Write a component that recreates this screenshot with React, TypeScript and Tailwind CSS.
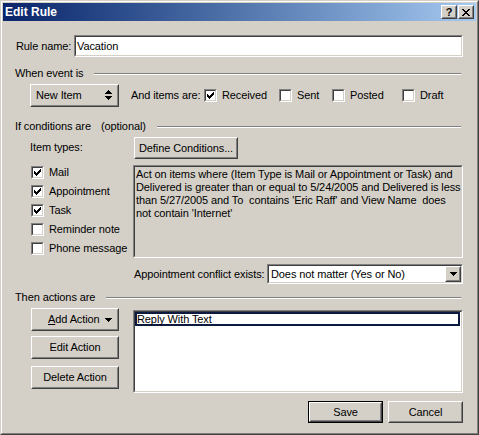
import React from "react";

const Raised = ({ className = "", inner = "", children }: { className?: string; inner?: string; children?: React.ReactNode }) => (
  <div className={`border border-t-white border-l-white border-r-[#404040] border-b-[#404040] bg-[#d4d0c8] ${className}`}>
    <div className={`h-full w-full border border-t-[#d4d0c8] border-l-[#d4d0c8] border-r-[#808080] border-b-[#808080] flex items-center ${inner}`}>
      {children}
    </div>
  </div>
);

const Sunken = ({ className = "", inner = "", children }: { className?: string; inner?: string; children?: React.ReactNode }) => (
  <div className={`border border-t-[#808080] border-l-[#808080] border-r-white border-b-white ${className}`}>
    <div className={`h-full w-full border border-t-[#404040] border-l-[#404040] border-r-[#d4d0c8] border-b-[#d4d0c8] ${inner}`}>
      {children}
    </div>
  </div>
);

const Check = ({ checked }: { checked?: boolean }) => (
  <div className="w-[13px] h-[13px] shrink-0 border border-t-[#808080] border-l-[#808080] border-r-white border-b-white">
    <div className="w-full h-full border border-t-[#404040] border-l-[#404040] border-r-[#d4d0c8] border-b-[#d4d0c8] bg-white">
      {checked && (
        <svg width="9" height="9" viewBox="0 0 9 9" shapeRendering="crispEdges" className="block">
          <path
            d="M1 3h1v3H1zM2 4h1v3H2zM3 5h1v3H3zM4 4h1v3H4zM5 3h1v3H5zM6 2h1v3H6zM7 1h1v3H7z"
            fill="#000"
          />
        </svg>
      )}
    </div>
  </div>
);

const DownTri = () => (
  <svg width="7" height="4" viewBox="0 0 7 4" shapeRendering="crispEdges" className="block">
    <path d="M0 0h7v1H0zM1 1h5v1H1zM2 2h3v1H2zM3 3h1v1H3z" fill="#000" />
  </svg>
);

const Header = ({ children, className = "" }: { children: React.ReactNode; className?: string }) => (
  <div className={`flex items-center h-[14px] ${className}`}>
    <div className="flex items-center whitespace-pre">{children}</div>
    <div className="flex-1 ml-[11px] mr-[2px] mt-[1px] h-[2px] border-t border-t-[#808080] border-b border-b-white" />
  </div>
);

const CheckItem = ({ label, checked, className = "" }: { label: string; checked?: boolean; className?: string }) => (
  <div className={`flex items-center shrink-0 ${className}`}>
    <Check checked={checked} />
    <span className="ml-[5px]">{label}</span>
  </div>
);

export default function App() {
  return (
    <div className="w-[479px] h-[435px] bg-[#d4d0c8] text-black text-[11px] leading-[13px] tracking-[-0.1px] whitespace-nowrap font-['Liberation_Sans',Arial,sans-serif] border border-t-[#d4d0c8] border-l-[#d4d0c8] border-r-[#404040] border-b-[#404040] overflow-hidden">
      <div className="w-full h-full border border-t-white border-l-white border-r-[#808080] border-b-[#808080] p-[1px] flex flex-col">
        {/* Title bar */}
        <div className="h-[18px] shrink-0 bg-linear-to-r from-[#0a246a] to-[#a6caf0] flex items-center justify-between pl-[2px] pr-[2px]">
          <span className="text-white font-bold text-[12px] tracking-normal">Edit Rule</span>
          <div className="flex gap-[1px]">
            <Raised className="w-[16px] h-[14px]" inner="justify-center">
              <span className="font-bold text-[11px] leading-[11px]">?</span>
            </Raised>
            <Raised className="w-[16px] h-[14px]" inner="justify-center">
              <svg width="8" height="7" viewBox="0 0 8 7" shapeRendering="crispEdges" className="block">
                <path d="M0 0h2v1H0zM6 0h2v1H6zM1 1h2v1H1zM5 1h2v1H5zM2 2h4v1H2zM3 3h2v1H3zM2 4h4v1H2zM1 5h2v1H1zM5 5h2v1H5zM0 6h2v1H0zM6 6h2v1H6z" fill="#000" />
              </svg>
            </Raised>
          </div>
        </div>

        {/* Body */}
        <div className="flex flex-col pl-[12px] pr-[13px]">
          {/* Rule name */}
          <div className="flex items-center mt-[14px] h-[22px]">
            <span className="ml-[1px] w-[58px] shrink-0">Rule name:</span>
            <Sunken className="flex-1 min-w-0 h-full bg-white" inner="flex items-center pl-[1px]">
              <span>Vacation</span>
            </Sunken>
          </div>

          <Header className="mt-[9px]">When event is</Header>

          <div className="flex items-center mt-[4px] h-[23px]">
            <Raised className="ml-[15px] w-[89px] h-full shrink-0" inner="justify-between pl-[4px] pr-[5px]">
              <span>New Item</span>
              <svg width="7" height="13" viewBox="0 0 7 13" shapeRendering="crispEdges" className="block">
                <path d="M3 1h1v1H3zM2 2h3v1H2zM1 3h5v1H1zM0 4h7v1H0zM0 7h7v1H0zM1 8h5v1H1zM2 9h3v1H2zM3 10h1v1H3z" fill="#000" />
              </svg>
            </Raised>
            <span className="ml-[12px] w-[73px] shrink-0">And items are:</span>
            <CheckItem label="Received" checked className="w-[75px]" />
            <CheckItem label="Sent" className="w-[53px]" />
            <CheckItem label="Posted" className="w-[70px]" />
            <CheckItem label="Draft" />
          </div>

          <Header className="mt-[12px]">
            <span>If conditions are</span>
            <span className="ml-[10px]">(optional)</span>
          </Header>

          <div className="flex h-[125px]">
            <div className="ml-[15px] w-[103px] shrink-0 flex flex-col">
              <div className="mt-[7px] h-[14px] flex items-center">Item types:</div>
              <div className="mt-[9px] flex flex-col">
                <CheckItem label="Mail" checked className="h-[19px] ml-[1px]" />
                <CheckItem label="Appointment" checked className="h-[19px] ml-[1px]" />
                <CheckItem label="Task" checked className="h-[19px] ml-[1px]" />
                <CheckItem label="Reminder note" className="h-[19px] ml-[1px]" />
                <CheckItem label="Phone message" className="h-[19px] ml-[1px]" />
              </div>
            </div>
            <div className="flex-1 min-w-0 flex flex-col">
              <Raised className="mt-[4px] ml-[1px] w-[104px] h-[22px]" inner="justify-center">
                <span>Define Conditions...</span>
              </Raised>
              <Sunken className="mt-[6px] h-[93px] overflow-hidden" inner="pl-[1px] pt-[1px]">
                <div className="whitespace-pre">
                  Act on items where (Item Type is Mail or Appointment or Task) and{"\n"}
                  Delivered is greater than or equal to 5/24/2005 and Delivered is less{"\n"}
                  than 5/27/2005 and To  contains 'Eric Raff' and View Name  does{"\n"}
                  not contain 'Internet'
                </div>
              </Sunken>
            </div>
          </div>

          <div className="flex items-center mt-[6px] h-[20px]">
            <span className="ml-[119px] w-[133px] shrink-0">Appointment conflict exists:</span>
            <Sunken className="flex-1 min-w-0 h-full bg-white" inner="flex items-center justify-between">
              <span className="pl-[2px]">Does not matter (Yes or No)</span>
              <Raised className="w-[16px] h-full shrink-0" inner="justify-center">
                <DownTri />
              </Raised>
            </Sunken>
          </div>

          <Header className="mt-[6px]">Then actions are</Header>

          <div className="flex h-[89px]">
            <div className="ml-[16px] w-[88px] shrink-0 flex flex-col">
              <Raised className="mt-[4px] h-[23px]" inner="justify-between pl-[15px] pr-[5px]">
                <span>
                  <span className="underline">A</span>dd Action
                </span>
                <DownTri />
              </Raised>
              <Raised className="mt-[5px] h-[23px]" inner="justify-center">
                <span>Edit Action</span>
              </Raised>
              <Raised className="mt-[7px] h-[23px]" inner="justify-center">
                <span>Delete Action</span>
              </Raised>
            </div>
            <Sunken className="ml-[14px] flex-1 min-w-0 mt-[6px] h-[83px] bg-white" inner="">
              <div className="mr-[1px] h-[14px] border-2 border-[#0c1a40] bg-white flex items-center">
                <span>Reply With Text</span>
              </div>
            </Sunken>
          </div>

          <div className="flex justify-end gap-[5px] mt-[8px] h-[22px]">
            <div className="w-[75px] h-full border border-black">
              <Raised className="w-full h-full" inner="justify-center">
                <span>Save</span>
              </Raised>
            </div>
            <Raised className="w-[75px] h-full" inner="justify-center">
              <span>Cancel</span>
            </Raised>
          </div>
        </div>
      </div>
    </div>
  );
}
